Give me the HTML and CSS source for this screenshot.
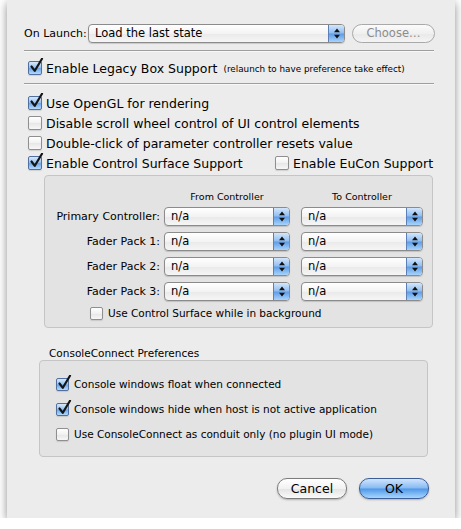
FILE: index.html
```html
<!DOCTYPE html>
<html lang="en">
<head>
    <meta charset="UTF-8">
    <title>Preferences</title>
    <link rel="stylesheet" href="styles.css">
</head>
<body>
    <div class="sheet">
        <div class="launch-row">
            <span class="launch-label">On Launch:</span>
            <div class="popup launch-popup">
                <span class="popup-value">Load the last state</span>
                <span class="arrows"><svg width="8" height="11" viewBox="0 0 8 11"><path d="M4 0.5 L7 4.2 L1 4.2 Z M4 10.5 L7 6.8 L1 6.8 Z" fill="#111"/></svg></span>
            </div>
            <button class="btn choose" disabled>Choose…</button>
        </div>
        <div class="sep"></div>
        <label class="check-row legacy">
            <span class="cb on"><svg width="17" height="17" viewBox="0 0 17 17"><path d="M3.5 8.5 L6.8 12.8 L14 0.8" fill="none" stroke="#151515" stroke-width="2.2" stroke-linecap="round" stroke-linejoin="round"/></svg></span>
            <span>Enable Legacy Box Support</span>
            <span class="note">(relaunch to have preference take effect)</span>
        </label>
        <div class="sep second"></div>
        <div class="checks">
            <label class="check-row">
                <span class="cb on"><svg width="17" height="17" viewBox="0 0 17 17"><path d="M3.5 8.5 L6.8 12.8 L14 0.8" fill="none" stroke="#151515" stroke-width="2.2" stroke-linecap="round" stroke-linejoin="round"/></svg></span>
                <span>Use OpenGL for rendering</span>
            </label>
            <label class="check-row">
                <span class="cb"></span>
                <span>Disable scroll wheel control of UI control elements</span>
            </label>
            <label class="check-row">
                <span class="cb"></span>
                <span>Double-click of parameter controller resets value</span>
            </label>
            <div class="check-row">
                <label class="surface-check">
                    <span class="cb on"><svg width="17" height="17" viewBox="0 0 17 17"><path d="M3.5 8.5 L6.8 12.8 L14 0.8" fill="none" stroke="#151515" stroke-width="2.2" stroke-linecap="round" stroke-linejoin="round"/></svg></span>
                    <span>Enable Control Surface Support</span>
                </label>
                <label class="eucon-check">
                    <span class="cb"></span>
                    <span>Enable EuCon Support</span>
                </label>
            </div>
        </div>

        <div class="group surface">
            <div class="cs-row cs-head">
                <span class="cs-label"></span>
                <span class="col-a">From Controller</span>
                <span class="col-b">To Controller</span>
            </div>
            <div class="cs-row">
                <span class="cs-label">Primary Controller:</span>
                <div class="popup col-a"><span class="popup-value">n/a</span><span class="arrows"><svg width="8" height="11" viewBox="0 0 8 11"><path d="M4 0.5 L7 4.2 L1 4.2 Z M4 10.5 L7 6.8 L1 6.8 Z" fill="#111"/></svg></span></div>
                <div class="popup col-b"><span class="popup-value">n/a</span><span class="arrows"><svg width="8" height="11" viewBox="0 0 8 11"><path d="M4 0.5 L7 4.2 L1 4.2 Z M4 10.5 L7 6.8 L1 6.8 Z" fill="#111"/></svg></span></div>
            </div>
            <div class="cs-row">
                <span class="cs-label">Fader Pack 1:</span>
                <div class="popup col-a"><span class="popup-value">n/a</span><span class="arrows"><svg width="8" height="11" viewBox="0 0 8 11"><path d="M4 0.5 L7 4.2 L1 4.2 Z M4 10.5 L7 6.8 L1 6.8 Z" fill="#111"/></svg></span></div>
                <div class="popup col-b"><span class="popup-value">n/a</span><span class="arrows"><svg width="8" height="11" viewBox="0 0 8 11"><path d="M4 0.5 L7 4.2 L1 4.2 Z M4 10.5 L7 6.8 L1 6.8 Z" fill="#111"/></svg></span></div>
            </div>
            <div class="cs-row">
                <span class="cs-label">Fader Pack 2:</span>
                <div class="popup col-a"><span class="popup-value">n/a</span><span class="arrows"><svg width="8" height="11" viewBox="0 0 8 11"><path d="M4 0.5 L7 4.2 L1 4.2 Z M4 10.5 L7 6.8 L1 6.8 Z" fill="#111"/></svg></span></div>
                <div class="popup col-b"><span class="popup-value">n/a</span><span class="arrows"><svg width="8" height="11" viewBox="0 0 8 11"><path d="M4 0.5 L7 4.2 L1 4.2 Z M4 10.5 L7 6.8 L1 6.8 Z" fill="#111"/></svg></span></div>
            </div>
            <div class="cs-row">
                <span class="cs-label">Fader Pack 3:</span>
                <div class="popup col-a"><span class="popup-value">n/a</span><span class="arrows"><svg width="8" height="11" viewBox="0 0 8 11"><path d="M4 0.5 L7 4.2 L1 4.2 Z M4 10.5 L7 6.8 L1 6.8 Z" fill="#111"/></svg></span></div>
                <div class="popup col-b"><span class="popup-value">n/a</span><span class="arrows"><svg width="8" height="11" viewBox="0 0 8 11"><path d="M4 0.5 L7 4.2 L1 4.2 Z M4 10.5 L7 6.8 L1 6.8 Z" fill="#111"/></svg></span></div>
            </div>
            <label class="check-row small background-check">
                <span class="cb"></span>
                <span>Use Control Surface while in background</span>
            </label>
        </div>

        <div class="group-title">ConsoleConnect Preferences</div>
        <div class="group console">
            <label class="check-row small">
                <span class="cb on"><svg width="17" height="17" viewBox="0 0 17 17"><path d="M3.5 8.5 L6.8 12.8 L14 0.8" fill="none" stroke="#151515" stroke-width="2.2" stroke-linecap="round" stroke-linejoin="round"/></svg></span>
                <span>Console windows float when connected</span>
            </label>
            <label class="check-row small">
                <span class="cb on"><svg width="17" height="17" viewBox="0 0 17 17"><path d="M3.5 8.5 L6.8 12.8 L14 0.8" fill="none" stroke="#151515" stroke-width="2.2" stroke-linecap="round" stroke-linejoin="round"/></svg></span>
                <span>Console windows hide when host is not active application</span>
            </label>
            <label class="check-row small">
                <span class="cb"></span>
                <span>Use ConsoleConnect as conduit only (no plugin UI mode)</span>
            </label>
        </div>

        <div class="buttons">
            <button class="btn push">Cancel</button>
            <button class="btn push default">OK</button>
        </div>
    </div>
</body>
</html>
```

FILE: styles.css
```css
body {
    margin: 0;
    background: #ffffff;
    font-family: "DejaVu Sans", sans-serif;
    font-size: 12.5px;
    color: #000;
}
.sheet {
    margin-left: 7px;
    width: 448px;
    height: 518px;
    box-sizing: border-box;
    padding-top: 23px;
    background: #ececec;
    box-shadow: 0 3px 9px rgba(0, 0, 0, 0.45);
}
.launch-row {
    display: flex;
    align-items: center;
    height: 20px;
    padding-left: 17px;
}
.launch-label {
    flex: none;
    width: 64px;
    white-space: nowrap;
    font-size: 11px;
}
.popup {
    display: flex;
    align-items: stretch;
    height: 19px;
    box-sizing: border-box;
    border: 1px solid #8b8b8b;
    border-radius: 4px;
    background: linear-gradient(#ffffff, #f3f3f3 50%, #e9e9e9 51%, #f6f6f6);
    box-shadow: 0 1px 1px rgba(0, 0, 0, 0.15);
    overflow: hidden;
}
.launch-popup {
    flex: none;
    width: 257px;
}
.popup-value {
    flex: 1;
    padding-left: 6px;
    font-size: 11.5px;
    line-height: 17px;
}
.arrows {
    width: 15px;
    display: flex;
    align-items: center;
    justify-content: center;
    border-left: 1px solid #5d7fb8;
    background: linear-gradient(#d4e6fb, #8fbdf1 48%, #5d9ce6 52%, #a9d3fb);
}
.btn {
    font-family: "DejaVu Sans", sans-serif;
    font-size: 12px;
    border-radius: 10px;
    box-sizing: border-box;
    margin: 0;
    padding: 0;
}
.choose {
    flex: none;
    margin-left: 7px;
    width: 83px;
    height: 19px;
    border: 1px solid #a9a9a9;
    background: linear-gradient(#fbfbfb, #f0f0f0 50%, #e9e9e9 51%, #f4f4f4);
    color: #8c8c8c;
    font-size: 11.5px;
}
.sep {
    margin: 7px 21px 0 17px;
    height: 1px;
    background: #9e9e9e;
    border-bottom: 1px solid #f8f8f8;
}
.sep.second {
    margin-top: 5px;
}
.check-row {
    display: flex;
    align-items: center;
    height: 20px;
    padding-left: 21px;
}
.legacy {
    margin-top: 6px;
}
.note {
    font-size: 8.8px;
    margin-left: 6px;
    padding-top: 1px;
}
.checks {
    margin-top: 8px;
}
.cb {
    position: relative;
    flex: none;
    width: 14px;
    height: 14px;
    box-sizing: border-box;
    margin-right: 4px;
    border: 1px solid #8f8f8f;
    border-radius: 2px;
    background: linear-gradient(#ffffff, #f1f1f1 50%, #e6e6e6 51%, #f7f7f7);
    box-shadow: 0 1px 1px rgba(0, 0, 0, 0.12);
}
.cb.on {
    border-color: #52709f;
    background: linear-gradient(#d7e8fb, #95c1f0 48%, #6aa5e8 52%, #b4d9fb);
}
.cb svg {
    position: absolute;
    left: -1px;
    top: -4px;
}
.surface-check {
    display: flex;
    align-items: center;
    width: 247px;
}
.eucon-check {
    display: flex;
    align-items: center;
}
.group {
    box-sizing: border-box;
    width: 389px;
    border: 1px solid #c5c5c5;
    border-radius: 4px;
    background: #e3e3e3;
}
.surface {
    margin: 2px 0 0 37px;
    height: 153px;
    padding-top: 13px;
}
.cs-row {
    display: flex;
    align-items: center;
    height: 19px;
    margin-bottom: 6px;
}
.cs-head {
    height: 14px;
    margin-bottom: 4px;
    font-size: 9.5px;
}
.cs-head span {
    text-align: center;
}
.cs-label {
    width: 115px;
    margin-right: 4px;
    text-align: right;
    font-size: 11px;
}
.col-a {
    width: 126px;
    margin-right: 11px;
}
.col-b {
    width: 122px;
}
.check-row.small {
    font-size: 10.5px;
}
.check-row.small .cb {
    width: 13px;
    height: 13px;
    margin-right: 5px;
}
.background-check {
    margin-top: -1px;
    padding-left: 45px;
    height: 14px;
}
.group-title {
    margin: 18px 0 0 42px;
    height: 14px;
    line-height: 14px;
    font-size: 10.5px;
}
.console {
    margin-left: 32px;
    height: 97px;
    padding-top: 15px;
}
.console .check-row {
    height: 16px;
    padding-left: 16px;
    margin-bottom: 9px;
}
.buttons {
    display: flex;
    justify-content: flex-end;
    gap: 12px;
    margin-top: 21px;
    padding-right: 26px;
}
.push {
    width: 70px;
    height: 21px;
    border: 1px solid #7c7c7c;
    background: linear-gradient(#ffffff, #f2f2f2 50%, #e3e3e3 51%, #fafafa);
    box-shadow: 0 1px 2px rgba(0, 0, 0, 0.25);
    font-size: 12.5px;
}
.push.default {
    border-color: #3d5d99;
    background: linear-gradient(#cfe5fc, #86baf2 48%, #4f97e8 52%, #a7d6fd);
}
```
